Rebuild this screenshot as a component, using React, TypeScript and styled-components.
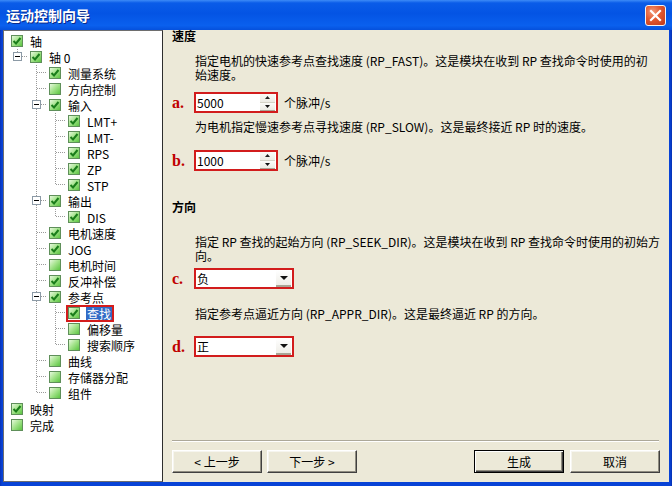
import React from 'react';
import styled, { createGlobalStyle } from 'styled-components';

const GlobalStyle = createGlobalStyle`
  html, body { margin: 0; padding: 0; }
  body {
    background: #ffffff;
    font-family: "Noto Sans CJK SC", "Liberation Sans", sans-serif;
    font-size: 12px;
    color: #000;
  }
  * { box-sizing: border-box; }
`;

/* ---------- window chrome ---------- */

const Window = styled.div`
  width: 672px;
  height: 486px;
  display: flex;
  flex-direction: column;
  background: #0842d2;
`;

const TitleBar = styled.div`
  height: 30px;
  flex: none;
  display: flex;
  align-items: center;
  justify-content: space-between;
  padding: 0 6px 0 6px;
  background: linear-gradient(
    180deg,
    #3d8bf7 0%,
    #0a5ce8 10%,
    #0454e4 45%,
    #0a60ee 85%,
    #0550dc 100%
  );
`;

const Title = styled.span`
  color: #fff;
  font-weight: bold;
  font-size: 14px;
  line-height: 16px;
  text-shadow: 1px 1px 0 #0a2a8a;
`;

const CloseButton = styled.div`
  width: 21px;
  height: 21px;
  border: 1px solid #f4f4f4;
  border-radius: 3px;
  background: radial-gradient(circle at 35% 30%, #f29a7a 0%, #e2582f 45%, #c0381a 100%);
  display: flex;
  align-items: center;
  justify-content: center;
`;

const Frame = styled.div`
  flex: 1;
  min-height: 0;
  display: flex;
  padding: 0 4px 4px 3px;
  background: linear-gradient(90deg, #0831b8 0, #0843d6 2px, #0843d6 calc(100% - 2px), #0630b0 100%);
`;

const Body = styled.div`
  flex: 1;
  display: flex;
  background: #ece9d8;
`;

/* ---------- tree ---------- */

const TreePanel = styled.div`
  width: 160px;
  flex: none;
  background: #fff;
  border: 1px solid #6e6e6e;
  border-right-color: #2e2e2e;
  padding-top: 2px;
`;

const TreeRow = styled.div`
  height: 16px;
  display: flex;
  align-items: center;
  padding-left: 4px;
  white-space: nowrap;
`;

const GuideSvg = styled.svg`
  flex: none;
  display: block;
`;

const ItemWrap = styled.span<{ $selected?: boolean }>`
  display: inline-flex;
  align-items: center;
  height: 13px;
  margin-left: 3px;
  box-shadow: ${(p) => (p.$selected ? '0 0 0 2px #d41c1c' : 'none')};
`;

const Check = styled.span`
  width: 12px;
  height: 12px;
  flex: none;
  border: 1px solid #5f8f5a;
  background: linear-gradient(135deg, #e6f8dc 0%, #a6e48e 45%, #5cc542 100%);
  display: flex;
  align-items: center;
  justify-content: center;
`;

const ItemLabel = styled.span<{ $selected?: boolean }>`
  margin-left: 6px;
  padding: 0 1px;
  line-height: 13px;
  height: 13px;
  font-size: 12px;
  background: ${(p) => (p.$selected ? '#316ac5' : 'transparent')};
  color: ${(p) => (p.$selected ? '#fff' : '#000')};
`;

type Node = { label: string; checked?: boolean; selected?: boolean; children?: Node[] };

const tree: Node[] = [
  {
    label: '轴',
    checked: true,
    children: [
      {
        label: '轴 0',
        checked: true,
        children: [
          { label: '测量系统', checked: true },
          { label: '方向控制' },
          {
            label: '输入',
            checked: true,
            children: [
              { label: 'LMT+', checked: true },
              { label: 'LMT-', checked: true },
              { label: 'RPS', checked: true },
              { label: 'ZP', checked: true },
              { label: 'STP', checked: true },
            ],
          },
          { label: '输出', checked: true, children: [{ label: 'DIS', checked: true }] },
          { label: '电机速度', checked: true },
          { label: 'JOG', checked: true },
          { label: '电机时间' },
          { label: '反冲补偿', checked: true },
          {
            label: '参考点',
            checked: true,
            children: [
              { label: '查找', checked: true, selected: true },
              { label: '偏移量' },
              { label: '搜索顺序' },
            ],
          },
          { label: '曲线' },
          { label: '存储器分配' },
          { label: '组件' },
        ],
      },
    ],
  },
  { label: '映射', checked: true },
  { label: '完成' },
];

type FlatRow = { node: Node; level: number; pass: boolean[]; last: boolean };

function flatten(nodes: Node[], level: number, pass: boolean[], out: FlatRow[]) {
  nodes.forEach((n, i) => {
    const last = i === nodes.length - 1;
    out.push({ node: n, level, pass, last });
    if (n.children) {
      flatten(n.children, level + 1, level >= 1 ? [...pass, !last] : pass, out);
    }
  });
  return out;
}

const rows = flatten(tree, 0, [], []);

const DOT = '#9a9a9a';

function Guide({ kind, expander }: { kind: 'pass' | 'tee' | 'end' | 'none'; expander?: boolean }) {
  return (
    <GuideSvg width={19} height={16} shapeRendering="crispEdges">
      {kind !== 'none' && (
        <line
          x1={9.5}
          y1={0}
          x2={9.5}
          y2={kind === 'end' ? 8 : 16}
          stroke={DOT}
          strokeDasharray="1 1"
        />
      )}
      {(kind === 'tee' || kind === 'end') && (
        <line x1={10} y1={7.5} x2={19} y2={7.5} stroke={DOT} strokeDasharray="1 1" />
      )}
      {expander && (
        <g>
          <rect x={5.5} y={3.5} width={8} height={8} fill="#fff" stroke="#8c9aa6" />
          <line x1={7} y1={7.5} x2={12} y2={7.5} stroke="#000" />
        </g>
      )}
    </GuideSvg>
  );
}

function CheckBox({ checked }: { checked?: boolean }) {
  return (
    <Check>
      {checked && (
        <svg width={10} height={10} viewBox="0 0 10 10">
          <path d="M1.5 5 L4 7.5 L8.5 2" fill="none" stroke="#1a7d1a" strokeWidth={2} />
        </svg>
      )}
    </Check>
  );
}

function Tree() {
  return (
    <TreePanel>
      {rows.map((r, idx) => {
        const cells = [];
        for (let k = 1; k < r.level; k++) {
          cells.push(<Guide key={'p' + k} kind={r.pass[k - 1] ? 'pass' : 'none'} />);
        }
        if (r.level >= 1) {
          cells.push(
            <Guide key="own" kind={r.last ? 'end' : 'tee'} expander={!!r.node.children} />
          );
        }
        return (
          <TreeRow key={idx}>
            {cells}
            <ItemWrap $selected={r.node.selected}>
              <CheckBox checked={r.node.checked} />
              <ItemLabel $selected={r.node.selected}>{r.node.label}</ItemLabel>
            </ItemWrap>
          </TreeRow>
        );
      })}
    </TreePanel>
  );
}

/* ---------- content ---------- */

const Content = styled.div`
  flex: 1;
  display: flex;
  flex-direction: column;
  padding: 0 9px 9px 9px;
`;

const Heading = styled.div<{ $mt: number }>`
  font-weight: bold;
  font-size: 12px;
  line-height: 12px;
  margin-top: ${(p) => p.$mt}px;
`;

const Desc = styled.div<{ $mt: number }>`
  padding-left: 23px;
  line-height: 14px;
  white-space: nowrap;
  margin-top: ${(p) => p.$mt}px;
`;

const FieldRow = styled.div<{ $mt: number }>`
  display: flex;
  align-items: center;
  height: 21px;
  margin-top: ${(p) => p.$mt}px;
`;

const Marker = styled.span`
  width: 22px;
  flex: none;
  color: #c00000;
  font-family: "Liberation Serif", serif;
  font-weight: bold;
  font-size: 16px;
  line-height: 16px;
`;

const RedFrame = styled.div<{ $w: number }>`
  width: ${(p) => p.$w}px;
  height: 21px;
  border: 2px solid #d21c1c;
  background: #fff;
  display: flex;
  align-items: stretch;
`;

const FieldText = styled.span`
  flex: 1;
  padding-left: 1px;
  line-height: 17px;
  font-size: 12px;
`;

const SpinBox = styled.div`
  width: 15px;
  flex: none;
  display: flex;
  flex-direction: column;
  margin: 0 1px 0 0;
`;

const SpinHalf = styled.div<{ $down?: boolean }>`
  flex: 1;
  display: flex;
  align-items: center;
  justify-content: center;
  background: linear-gradient(180deg, #fbfbf8 0%, #ecebe4 100%);
  border-bottom: 1px solid ${(p) => (p.$down ? '#a8a596' : '#d4d2c6')};
`;

const ComboButton = styled.div`
  width: 15px;
  flex: none;
  margin: 0 1px 0 0;
  display: flex;
  align-items: center;
  justify-content: center;
  background: linear-gradient(180deg, #ffffff 0%, #efeee8 100%);
  border-bottom: 2px solid #a8a596;
`;

const Unit = styled.span`
  margin-left: 6px;
  line-height: 14px;
`;

const Separator = styled.div`
  margin-top: auto;
  height: 2px;
  border-top: 1px solid #aca899;
  border-bottom: 1px solid #ffffff;
  margin-right: 1px;
`;

const ButtonRow = styled.div`
  display: flex;
  margin-top: 8px;
`;

const Button = styled.div<{ $default?: boolean; $gapLeft?: number }>`
  width: 90px;
  height: 23px;
  display: flex;
  align-items: center;
  justify-content: center;
  font-size: 12px;
  background: #ece9d8;
  margin-left: ${(p) => (p.$gapLeft === undefined ? 0 : p.$gapLeft)}px;
  border: 1px solid;
  border-color: ${(p) => (p.$default ? '#000 #000 #000 #000' : '#ffffff #404040 #404040 #ffffff')};
  box-shadow: ${(p) =>
    p.$default
      ? 'inset 1px 1px #ffffff, inset -1px -1px #404040, inset -2px -2px #8f8c80'
      : 'inset -1px -1px #8f8c80, inset 1px 1px #f6f5ef'};
`;

const ButtonSpacer = styled.div`
  flex: 1;
`;

function UpArrow() {
  return (
    <svg width={5} height={3} viewBox="0 0 5 3">
      <path d="M2.5 0 L5 3 L0 3 Z" fill="#222" />
    </svg>
  );
}
function DownArrow({ w = 5, h = 3 }: { w?: number; h?: number }) {
  return (
    <svg width={w} height={h} viewBox={`0 0 ${w} ${h}`}>
      <path d={`M0 0 L${w} 0 L${w / 2} ${h} Z`} fill="#111" />
    </svg>
  );
}

function Spinner({ value }: { value: string }) {
  return (
    <RedFrame $w={84}>
      <FieldText>{value}</FieldText>
      <SpinBox>
        <SpinHalf>
          <UpArrow />
        </SpinHalf>
        <SpinHalf $down>
          <DownArrow />
        </SpinHalf>
      </SpinBox>
    </RedFrame>
  );
}

function Combo({ value }: { value: string }) {
  return (
    <RedFrame $w={100}>
      <FieldText>{value}</FieldText>
      <ComboButton>
        <DownArrow w={8} h={4} />
      </ComboButton>
    </RedFrame>
  );
}

export default function App() {
  return (
    <>
      <GlobalStyle />
      <Window>
        <TitleBar>
          <Title>运动控制向导</Title>
          <CloseButton>
            <svg width={13} height={13} viewBox="0 0 13 13">
              <path d="M2 2 L11 11 M11 2 L2 11" stroke="#fff" strokeWidth={2.2} strokeLinecap="square" />
            </svg>
          </CloseButton>
        </TitleBar>
        <Frame>
          <Body>
            <Tree />
            <Content>
              <Heading $mt={0}>速度</Heading>
              <Desc $mt={12}>
                指定电机的快速参考点查找速度 (RP_FAST)。这是模块在收到 RP 查找命令时使用的初
                <br />
                始速度。
              </Desc>
              <FieldRow $mt={10}>
                <Marker>a.</Marker>
                <Spinner value="5000" />
                <Unit>个脉冲/s</Unit>
              </FieldRow>
              <Desc $mt={7}>为电机指定慢速参考点寻找速度 (RP_SLOW)。这是最终接近 RP 时的速度。</Desc>
              <FieldRow $mt={16}>
                <Marker>b.</Marker>
                <Spinner value="1000" />
                <Unit>个脉冲/s</Unit>
              </FieldRow>
              <Heading $mt={30}>方向</Heading>
              <Desc $mt={22}>
                指定 RP 查找的起始方向 (RP_SEEK_DIR)。这是模块在收到 RP 查找命令时使用的初始方
                <br />
                向。
              </Desc>
              <FieldRow $mt={5}>
                <Marker>c.</Marker>
                <Combo value="负" />
              </FieldRow>
              <Desc $mt={18}>指定参考点逼近方向 (RP_APPR_DIR)。这是最终逼近 RP 的方向。</Desc>
              <FieldRow $mt={15}>
                <Marker>d.</Marker>
                <Combo value="正" />
              </FieldRow>
              <Separator />
              <ButtonRow>
                <Button>&lt; 上一步</Button>
                <Button $gapLeft={5}>下一步 &gt;</Button>
                <ButtonSpacer />
                <Button $default>生成</Button>
                <Button $gapLeft={6}>取消</Button>
              </ButtonRow>
            </Content>
          </Body>
        </Frame>
      </Window>
    </>
  );
}
